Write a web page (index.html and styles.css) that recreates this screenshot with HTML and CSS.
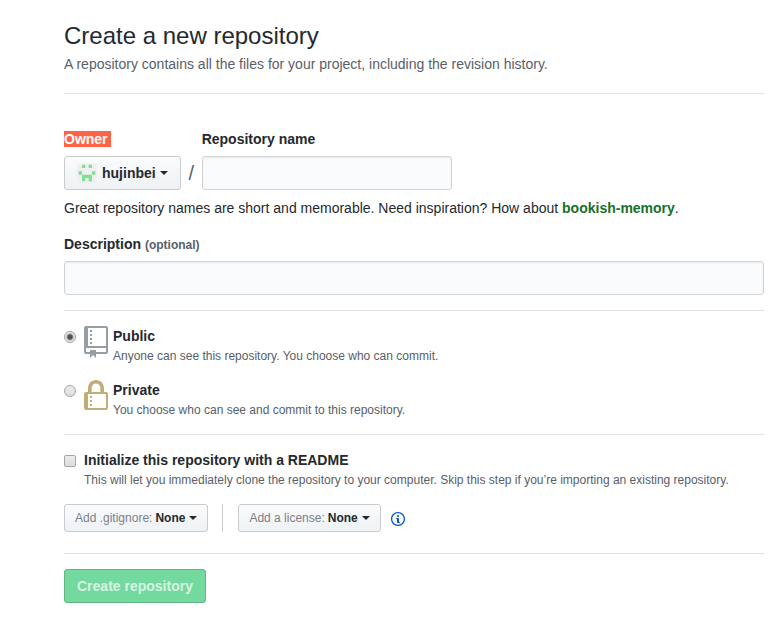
FILE: index.html
```html
<!DOCTYPE html>
<html lang="en">
<head>
<meta charset="utf-8">
<title>Create a new repository</title>
<link rel="stylesheet" href="styles.css">
</head>
<body>
<main class="page">
  <header class="heading">
    <h1>Create a new repository</h1>
    <p>A repository contains all the files for your project, including the revision history.</p>
  </header>
  <form>
    <section class="naming">
      <div class="name-row">
        <div class="field">
          <label class="label" for="owner"><mark>Owner&nbsp;</mark></label>
          <button class="btn owner" id="owner" type="button">
            <svg class="avatar" width="20" height="20" viewBox="0 0 12 12" aria-hidden="true">
              <rect width="12" height="12" rx="2" fill="#f0f0f0"/>
              <path fill="#7ee092" d="M3 1h2v2H3zM7 1h2v2H7zM1 5h2v2H1zM9 5h2v2H9zM3 7h6v4H7V9H5v2H3z"/>
            </svg>
            <span>hujinbei</span><span class="caret"></span>
          </button>
        </div>
        <span class="slash">/</span>
        <div class="field">
          <label class="label" for="name">Repository name</label>
          <input class="text-input name-input" id="name" type="text">
        </div>
      </div>
      <p class="hint">Great repository names are short and memorable. Need inspiration? How about <strong>bookish-memory</strong>.</p>
      <div class="field">
        <label class="label" for="description">Description <small>(optional)</small></label>
        <input class="text-input" id="description" type="text">
      </div>
    </section>

    <section class="choices">
      <div class="choice">
        <input class="radio" type="radio" name="visibility" id="public" checked>
        <svg class="public-icon" width="24" height="32" viewBox="0 0 12 16" aria-hidden="true"><path fill-rule="evenodd" d="M4 9H3V8h1v1zm0-3H3v1h1V6zm0-2H3v1h1V4zm0-2H3v1h1V2zm8-1v12c0 .55-.45 1-1 1H6v2l-1.500-1.500L3 16v-2H1c-.55 0-1-.45-1-1V1c0-.55.45-1 1-1h10c.55 0 1 .45 1 1zm-1 10H1v2h2v-1h3v1h5v-2zm0-10H2v9h9V1z"/></svg>
        <div>
          <label class="label" for="public">Public</label>
          <p class="note">Anyone can see this repository. You choose who can commit.</p>
        </div>
      </div>
      <div class="choice">
        <input class="radio" type="radio" name="visibility" id="private">
        <svg class="private-icon" width="24" height="32" viewBox="0 0 12 16" aria-hidden="true"><path fill-rule="evenodd" d="M4 13H3v-1h1v1zm8-6v7c0 .55-.45 1-1 1H1c-.55 0-1-.45-1-1V7c0-.55.45-1 1-1h1V4c0-2.200 1.800-4 4-4s4 1.800 4 4v2h1c.55 0 1 .45 1 1zM3.800 6h4.410V4c0-1.220-.98-2.200-2.200-2.200-1.220 0-2.200.98-2.200 2.200v2H3.800zM11 7H2v7h9V7zM4 8H3v1h1V8zm0 2H3v1h1v-1z"/></svg>
        <div>
          <label class="label" for="private">Private</label>
          <p class="note">You choose who can see and commit to this repository.</p>
        </div>
      </div>
    </section>

    <section class="setup">
      <div class="choice readme">
        <input class="checkbox" type="checkbox" id="readme">
        <div>
          <label class="label" for="readme">Initialize this repository with a README</label>
          <p class="note">This will let you immediately clone the repository to your computer. Skip this step if you’re importing an existing repository.</p>
        </div>
      </div>
      <div class="templates">
        <button class="btn btn-sm" type="button"><i>Add .gitignore:</i> <span>None</span><span class="caret"></span></button>
        <span class="divider"></span>
        <button class="btn btn-sm" type="button"><i>Add a license:</i> <span>None</span><span class="caret"></span></button>
        <a class="info" href="#" aria-label="License information">
          <svg width="14" height="16" viewBox="0 0 14 16" aria-hidden="true"><path fill-rule="evenodd" d="M6.300 5.690a.942.942 0 0 1-.28-.7c0-.28.09-.52.28-.7.19-.18.42-.28.7-.28.28 0 .52.09.7.28.18.19.28.42.28.7 0 .28-.09.52-.28.7a1 1 0 0 1-.7.3c-.28 0-.52-.11-.7-.3zM8 7.990c-.02-.25-.11-.48-.31-.69-.2-.19-.42-.3-.69-.31H6c-.27.02-.48.13-.69.31-.2.2-.3.44-.31.69h1v3c.02.27.11.5.31.69.2.2.42.31.69.31h1c.27 0 .48-.11.69-.31.2-.19.3-.42.31-.69H8V7.980v.01zM7 2.300c-3.140 0-5.700 2.540-5.700 5.680 0 3.140 2.560 5.700 5.700 5.700s5.700-2.550 5.700-5.700c0-3.150-2.560-5.690-5.700-5.690v.01zM7 .98c3.860 0 7 3.140 7 7s-3.140 7-7 7-7-3.120-7-7 3.140-7 7-7z"/></svg>
        </a>
      </div>
    </section>

    <section class="actions">
      <button class="btn btn-primary" type="submit" disabled>Create repository</button>
    </section>
  </form>
</main>
</body>
</html>
```
FILE: styles.css
```css
* {
  box-sizing: border-box;
}

body {
  margin: 0;
  background: #fff;
  color: #24292e;
  font: 14px/21px "Liberation Sans", Arial, sans-serif;
}

.page {
  padding: 18px 20px 20px 64px;
}

h1,
p {
  margin: 0;
}

h1 {
  font-size: 24px;
  font-weight: 400;
  line-height: 36px;
}

.heading {
  padding-bottom: 18px;
  color: #586069;
}

.heading h1 {
  color: #24292e;
}

.naming,
.choices,
.setup,
.actions {
  border-top: 1px solid #dfe2e5;
  padding: 15px 0;
}

.naming {
  padding-top: 35px;
}

.setup {
  padding-bottom: 21px;
}

.name-row {
  display: flex;
  align-items: flex-end;
}

.field {
  display: flex;
  flex-direction: column;
  align-items: flex-start;
  gap: 6px;
}

.label {
  display: block;
  font-weight: 700;
}

.label small {
  color: #586069;
  font-size: 12px;
  line-height: 12px;
}

mark {
  background: #ff6347;
  color: #fff;
}

.slash {
  width: 21px;
  color: #586069;
  font-size: 20px;
  line-height: 34px;
  text-align: center;
}

.text-input {
  width: 100%;
  height: 34px;
  border: 1px solid #d1d5da;
  border-radius: 3px;
  padding: 6px 8px;
  background: #fafbfc;
  box-shadow: inset 0 1px 2px rgba(27, 31, 35, 0.075);
  font: inherit;
}

.name-input {
  width: 250px;
}

.hint {
  margin: 8px 0 15px;
}

.hint strong {
  color: #176f2c;
}

.btn {
  display: inline-flex;
  align-items: center;
  height: 34px;
  border: 1px solid #c8cccf;
  border-radius: 3px;
  padding: 0 12px;
  background: linear-gradient(#fafbfc, #eff3f6 90%);
  color: #24292e;
  font: 700 14px/20px "Liberation Sans", Arial, sans-serif;
  white-space: nowrap;
}

.avatar {
  margin-right: 5px;
}

.caret {
  margin-left: 4px;
  border: 4px solid transparent;
  border-top-color: currentColor;
  border-bottom: 0;
}

.btn-sm {
  height: 28px;
  padding: 0 10px;
  font-size: 12px;
}

.btn-sm i {
  margin-right: 3px;
  color: #7c8085;
  font-style: normal;
  font-weight: 400;
}

.btn-primary {
  border-color: #5fb585;
  background: #74d99f;
  color: #d5f4e2;
}

.choice {
  display: flex;
  align-items: flex-start;
}

.choice + .choice {
  margin-top: 15px;
}

.choice svg {
  flex: none;
  margin: 0 5px 0 8px;
}

.public-icon {
  fill: #959da5;
}

.private-icon {
  fill: #bfae78;
}

.note {
  color: #586069;
  font-size: 12px;
  line-height: 18px;
}

.radio,
.checkbox {
  flex: none;
  appearance: none;
  width: 12px;
  height: 12px;
  margin: 5px 0 0;
  border: 1px solid #a5a5a5;
  border-radius: 2px;
  background: linear-gradient(#ededed, #dcdcdc);
}

.radio {
  border-radius: 50%;
}

.radio:checked {
  background: radial-gradient(circle, #505050 0 2px, #e6e6e6 4px);
}

.readme .checkbox {
  margin-right: 8px;
}

.templates {
  display: flex;
  align-items: center;
  margin-top: 15px;
}

.divider {
  width: 1px;
  height: 28px;
  margin: 0 15px 0 14px;
  background: #c8cccf;
}

.info {
  display: flex;
  margin: 2px 0 0 10px;
  fill: #0353d6;
}
```
